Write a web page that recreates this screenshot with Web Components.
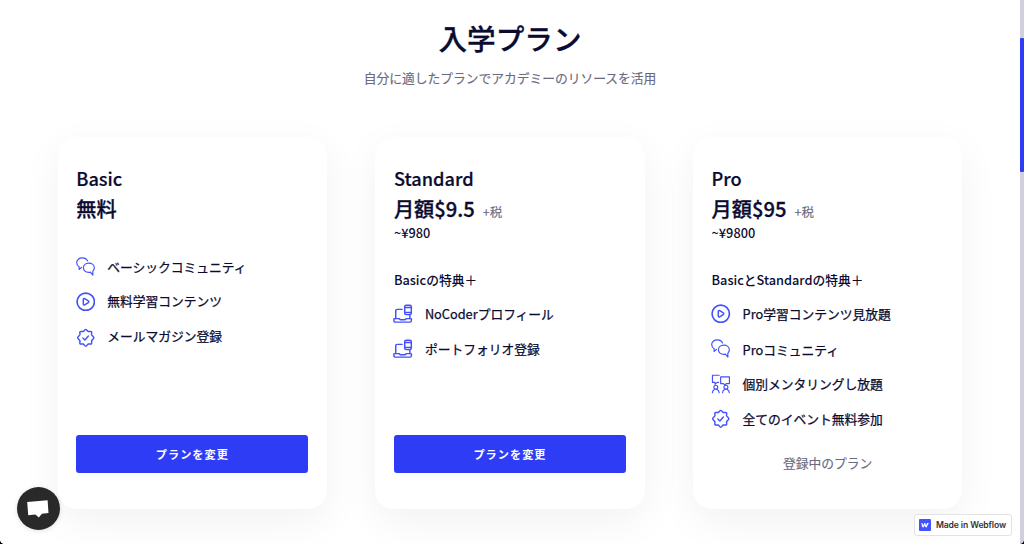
<!DOCTYPE html>
<html lang="ja">
<head>
<meta charset="utf-8">
<title>入学プラン</title>
<style>
    html, body {
        margin: 0;
        height: 544px;
        overflow: hidden;
    }

    body {
        font-family: "Noto Sans CJK JP", "Noto Sans", sans-serif;
        font-size: 12.75px;
        color: #0b0b31;
        background: #fff;
        --primary: #2e3cf5;
        --muted: #6b6b80;
    }
</style>
</head>
<body>
<pricing-page>
    <plan-card name="Basic" price="無料">
        <plan-feature icon="chat" style="--row: 34px; --icon-top: 2px">ベーシックコミュニティ</plan-feature>
        <plan-feature icon="play" style="--row: 35.5px; --icon-top: 3px">無料学習コンテンツ</plan-feature>
        <plan-feature icon="badge" style="--icon-top: 3.5px">メールマガジン登録</plan-feature>
        <plan-button slot="action">プランを変更</plan-button>
    </plan-card>
    <plan-card name="Standard" price="月額$9.5" tax="+税" yen="~¥980" perks="Basicの特典＋">
        <plan-feature icon="laptop" style="--row: 35px; --icon-top: 1.5px">NoCoderプロフィール</plan-feature>
        <plan-feature icon="laptop" style="--icon-top: 1.5px">ポートフォリオ登録</plan-feature>
        <plan-button slot="action">プランを変更</plan-button>
    </plan-card>
    <plan-card name="Pro" price="月額$95" tax="+税" yen="~¥9800" perks="BasicとStandardの特典＋">
        <plan-feature icon="play" style="--row: 35.5px; --icon-top: 1.5px">Pro学習コンテンツ見放題</plan-feature>
        <plan-feature icon="chat" style="--row: 34px; --icon-top: 1px">Proコミュニティ</plan-feature>
        <plan-feature icon="mentor" style="--row: 35.5px; --icon-top: 2.5px">個別メンタリングし放題</plan-feature>
        <plan-feature icon="badge" style="--icon-top: 2px">全てのイベント無料参加</plan-feature>
        <plan-button slot="action" current>登録中のプラン</plan-button>
    </plan-card>
</pricing-page>
<chat-launcher></chat-launcher>
<webflow-badge>Made in Webflow</webflow-badge>
<scroll-rail></scroll-rail>
<window-corners></window-corners>

<script>
const ICONS = {
    chat: `
        <g stroke-width="1.2">
            <path d="M3.200 12.700V9.900C1.500 8.800.7 7.300.7 5.600.7 2.900 3.200.9 6.400.9c2.500 0 4.600 1.200 5.500 3.200M3.200 12.700l2.400-2"/>
            <path d="M13.100 6.300c-3.200 0-5.500 2.100-5.500 4.800s2.300 4.700 5.500 4.700c.6 0 1.200-.1 1.700-.2l2.500 2.900v-4c1-.9 1.500-2.100 1.500-3.400 0-2.700-2.500-4.800-5.700-4.800z"/>
        </g>`,
    play: `
        <circle cx="10" cy="10" r="8.900" stroke-width="1.700"/>
        <path d="M7.500 7.700v4.600c0 .8.7 1.200 1.400.8l3.700-2.200c.7-.4.700-1.300 0-1.700L8.900 6.900c-.7-.4-1.400 0-1.400.8z" stroke-width="1.500"/>`,
    badge: `
        <path d="M10 1.400c.9 0 1.700 1.900 2.600 2.200.9.300 2.700-.5 3.300.2.600.600-.2 2.300.1 3.200.4.900 2.300 2.100 2.300 3s-1.900 2.100-2.300 3c-.3.900.5 2.600-.1 3.200-.6.700-2.400-.1-3.300.2-.9.400-1.700 2.300-2.600 2.300s-1.700-1.900-2.600-2.300c-.9-.3-2.700.5-3.300-.2-.6-.6.200-2.300-.1-3.200-.4-.9-2.300-2.100-2.300-3s1.900-2.100 2.300-3c.3-.9-.5-2.600.1-3.200.6-.7 2.400.1 3.300-.2.900-.3 1.700-2.200 2.600-2.200z" stroke-width="1.500"/>
        <path d="M7 10.300l2.100 2 3.600-4.100" stroke-width="1.400"/>`,
    laptop: `
        <g stroke-width="1.500">
            <rect x="12" y="1.200" width="6.800" height="9.600" rx="1.500"/>
            <path d="M12 3.500h6.800M12 8.600h6.800M9.400 5.500H4.200c-.8 0-1.400.6-1.400 1.400v8M17.300 10.900v4"/>
            <path d="M1.500 15h4.700l1.300 1.200h4.900l1.300-1.200h4.600c.4 0 .6.200.6.600v1.300c0 1-.7 1.700-1.700 1.700H2.600c-1 0-1.700-.7-1.700-1.700v-1.300c0-.4.2-.6.600-.6z"/>
        </g>`,
    mentor: `
        <g stroke-width="1.200">
            <path d="M8.400 1.300H1.500v7.300h2.600v1.900l2.300-1.900h1.300"/>
            <path d="M9.900 3h9v6.800h-3.200l-1.500 1.500-1.500-1.500H9.900z"/>
            <circle cx="4.900" cy="13.500" r="2"/>
            <circle cx="15.300" cy="13.500" r="2"/>
            <path d="M1.400 19.200c.1-1.700 1-3 2.500-3.600M8.400 19.200c-.1-1.700-1-3-2.500-3.600M11.800 19.200c.1-1.700 1-3 2.500-3.600M18.800 19.200c-.1-1.700-1-3-2.500-3.600"/>
        </g>`
};

class PricingPage extends HTMLElement {
    constructor() {
        super();
        this.attachShadow({mode: 'open'});
        this.shadowRoot.innerHTML = `
        <style>
            :host {
                display: block;
                width: 1020px;
            }

            header {
                display: flex;
                flex-direction: column;
                align-items: center;
                height: 137px;
                box-sizing: border-box;
                padding-top: 17px;
            }

            h1 {
                margin: 0;
                font-size: 28.6px;
                line-height: 42px;
                font-weight: 500;
                -webkit-text-stroke: 0.300px;
            }

            p {
                margin: 9.400px 0 0;
                line-height: 20px;
                color: var(--muted);
                -webkit-text-stroke: 0.150px;
            }

            .plans {
                display: grid;
                grid-template-columns: repeat(3, 1fr);
                gap: 48.500px;
                width: 904.500px;
                height: 372px;
                margin: 0 auto;
            }
        </style>
        <header>
            <h1>入学プラン</h1>
            <p>自分に適したプランでアカデミーのリソースを活用</p>
        </header>
        <div class="plans"><slot></slot></div>
        `;
    }
}

class PlanCard extends HTMLElement {
    constructor() {
        super();
        this.attachShadow({mode: 'open'});
    }

    connectedCallback() {
        const get = name => this.getAttribute(name) || '';
        const perks = get('perks');
        this.shadowRoot.innerHTML = `
        <style>
            :host {
                display: flex;
                flex-direction: column;
                box-sizing: border-box;
                padding: 25.500px 18.500px 36px;
                border-radius: 19px;
                background: #fff;
                box-shadow: 0 12px 40px rgba(0, 0, 0, 0.055);
            }

            h2 {
                margin: 0;
                font-size: 18.200px;
                line-height: 30px;
                font-weight: 500;
                -webkit-text-stroke: 0.200px;
            }

            .price {
                display: flex;
                align-items: baseline;
                gap: 8px;
                height: 30px;
                margin-top: 1px;
                font-size: 20.200px;
                line-height: 30px;
                font-weight: 500;
                -webkit-text-stroke: 0.300px;
            }

            .tax {
                font-size: 12.500px;
                font-weight: 400;
                color: var(--muted);
                -webkit-text-stroke: 0.150px;
            }

            .yen {
                height: 19px;
                line-height: 18px;
                font-weight: 500;
            }

            .perks {
                margin-top: 27.500px;
                line-height: 20px;
                font-weight: 500;
            }

            .features {
                flex: 1;
                padding-top: 14px;
            }
        </style>
        <h2>${get('name')}</h2>
        <div class="price"><span>${get('price')}</span><span class="tax">${get('tax')}</span></div>
        <div class="yen">${get('yen')}</div>
        ${perks ? `<div class="perks">${perks}</div>` : ''}
        <div class="features"><slot></slot></div>
        <slot name="action"></slot>
        `;
    }
}

class PlanFeature extends HTMLElement {
    constructor() {
        super();
        this.attachShadow({mode: 'open'});
    }

    connectedCallback() {
        this.shadowRoot.innerHTML = `
        <style>
            :host {
                display: flex;
                align-items: flex-start;
                gap: 12px;
                height: var(--row, 20px);
                margin-left: -0.500px;
                line-height: 20px;
                -webkit-text-stroke: 0.250px;
            }

            svg {
                flex: none;
                width: 19.500px;
                height: 19.500px;
                margin-top: calc(var(--icon-top) - 2px);
                fill: none;
                stroke: #4450f8;
                stroke-linejoin: round;
                stroke-linecap: round;
            }
        </style>
        <svg viewBox="0 0 20 20">${ICONS[this.getAttribute('icon')]}</svg>
        <span><slot></slot></span>
        `;
    }
}

class PlanButton extends HTMLElement {
    constructor() {
        super();
        this.attachShadow({mode: 'open'});
        this.shadowRoot.innerHTML = `
        <style>
            :host {
                display: flex;
                align-items: center;
                justify-content: center;
                height: 38.500px;
                border-radius: 3px;
                background: var(--primary);
                color: #fff;
                font-size: 11.200px;
                font-weight: 700;
                letter-spacing: 1px;
            }

            :host([current]) {
                height: 20px;
                padding-bottom: 1px;
                background: none;
                color: var(--muted);
                font-size: 12.750px;
                font-weight: 400;
                letter-spacing: 0;
                -webkit-text-stroke: 0.150px;
            }
        </style>
        <slot></slot>
        `;
    }
}

class ChatLauncher extends HTMLElement {
    constructor() {
        super();
        this.attachShadow({mode: 'open'});
        this.shadowRoot.innerHTML = `
        <style>
            :host {
                position: fixed;
                left: 17px;
                top: 487px;
                width: 43px;
                height: 43px;
                border-radius: 50%;
                background: #292929;
                box-shadow: 0 1px 5px rgba(0, 0, 0, 0.12);
            }

            svg {
                display: block;
            }
        </style>
        <svg width="43" height="43" viewBox="0 0 43 43">
            <path d="M10.200 15.100L30.600 13.300 31.500 26l-6.600.7-3.100 3.700-3.400-2.800-7.200.6z" fill="#fff"/>
        </svg>
        `;
    }
}

class WebflowBadge extends HTMLElement {
    constructor() {
        super();
        this.attachShadow({mode: 'open'});
        this.shadowRoot.innerHTML = `
        <style>
            :host {
                position: fixed;
                left: 914px;
                top: 514px;
                width: 98px;
                height: 22px;
                box-sizing: border-box;
                padding-left: 4px;
                display: flex;
                align-items: center;
                gap: 5px;
                border: 1px solid #e2e2e2;
                border-radius: 3px;
                background: #fff;
                color: #333;
                font: 600 8.600px Inter, sans-serif;
                letter-spacing: -0.120px;
                white-space: nowrap;
            }
        </style>
        <svg width="12" height="12" viewBox="0 0 12 12">
            <rect width="12" height="12" rx="1" fill="#4353ff"/>
            <path d="M2.400 4.100c1 0 1.400.5 1.500 1.400l.2 1.300 1.300-2.700c.8 0 1.200.4 1.300 1.200l.2 1.500 1.200-2.700h1.700L7.500 8.400c-1 0-1.500-.5-1.600-1.300l-.2-.9-1.200 2.200c-1 0-1.500-.4-1.600-1.300z" fill="#fff"/>
        </svg>
        <slot></slot>
        `;
    }
}

class ScrollRail extends HTMLElement {
    constructor() {
        super();
        this.attachShadow({mode: 'open'});
        this.shadowRoot.innerHTML = `
        <style>
            :host {
                position: fixed;
                right: 0;
                top: 0;
                bottom: 0;
                width: 4.300px;
                box-sizing: border-box;
                padding-top: 38px;
                background: #d0cfdc;
            }

            .thumb {
                height: 134px;
                border-radius: 1px;
                background: var(--primary);
            }
        </style>
        <div class="thumb"></div>
        `;
    }
}

// rounded bottom edge of the browser window
class WindowCorners extends HTMLElement {
    constructor() {
        super();
        this.attachShadow({mode: 'open'});
        this.shadowRoot.innerHTML = `
        <style>
            :host {
                position: fixed;
                left: 0;
                right: 0;
                bottom: 0;
                height: 4px;
                background:
                    radial-gradient(circle at 100% 0, transparent 3.500px, #000 4.200px) left / 4px 4px no-repeat,
                    radial-gradient(circle at 0 0, transparent 3.500px, #000 4.200px) right / 4px 4px no-repeat;
            }
        </style>
        `;
    }
}

customElements.define('pricing-page', PricingPage);
customElements.define('plan-card', PlanCard);
customElements.define('plan-feature', PlanFeature);
customElements.define('plan-button', PlanButton);
customElements.define('chat-launcher', ChatLauncher);
customElements.define('webflow-badge', WebflowBadge);
customElements.define('scroll-rail', ScrollRail);
customElements.define('window-corners', WindowCorners);
</script>
</body>
</html>
